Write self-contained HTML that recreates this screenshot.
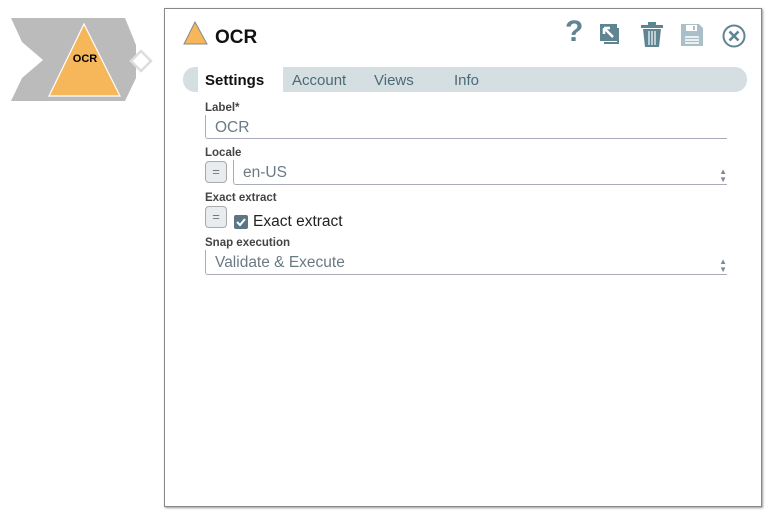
<!DOCTYPE html>
<html><head><style>
body{margin:0;width:773px;height:518px;background:#fff;font-family:"Liberation Sans",sans-serif;position:relative;overflow:hidden}
.panel{position:absolute;left:164px;top:8px;width:596px;height:497px;border:1px solid #888;box-shadow:1px 1px 2px #999;background:#fff}
.abs{position:absolute}
.lbl{position:absolute;left:40px;font-size:11.5px;font-weight:bold;color:#444}
.inp{position:absolute;border-left:1px solid #aab;border-bottom:1px solid #aab;border-radius:0 0 0 3px;font-size:15.5px;color:#6a7a85;padding-left:9px;padding-top:4px;box-sizing:border-box}
.eq{position:absolute;left:40px;width:22px;height:22px;border:1px solid #aaa;border-radius:4px;background:#e8ecee;box-sizing:border-box;color:#777;font-size:13px;text-align:center;line-height:19px}
.arr{position:absolute;right:0;font-size:8px;color:#7a8a95;line-height:8px}
</style></head><body>
<svg class="abs" style="left:0;top:0" width="160" height="110">
<polygon points="11,18 125,18 136,45 136,78 125,101 11,101 22,78 43,60 22,42" fill="#bbb"/>
<polygon points="84,24 120,96 49,96" fill="#f5b75a" stroke="#fff" stroke-width="1.2"/>
<text x="85" y="62" font-size="11" font-weight="bold" text-anchor="middle" font-family="Liberation Sans">OCR</text>
<polygon points="141,51 151,61 141,71 131,61" fill="#fff" stroke="#ddd" stroke-width="2.5"/>
</svg>
<div class="panel">
<svg class="abs" style="left:18px;top:12px" width="26" height="24"><polygon points="12,1 24,23 1,23" fill="#f5b75a" stroke="#888" stroke-width="1"/></svg>
<div class="abs" style="left:50px;top:18px;font-size:19px;font-weight:bold;color:#111">OCR</div>
<div class="abs" style="left:400px;top:6px;font-size:30px;font-weight:bold;color:#5f8593">?</div>
<svg class="abs" style="left:434px;top:14px" width="26" height="26"><rect x="1" y="1" width="17" height="17" fill="#5f8593"/><path d="M19 5v15H5" stroke="#5f8593" stroke-width="2" fill="none"/><path d="M14 14L5 5M5 5h6M5 5v6" stroke="#fff" stroke-width="2.5" fill="none"/></svg>
<svg class="abs" style="left:475px;top:13px" width="24" height="26"><rect x="1" y="3" width="22" height="3" fill="#5f8593"/><rect x="8" y="0" width="8" height="3" fill="#5f8593"/><path d="M3 7l2 18h14l2-18z" fill="#5f8593"/><path d="M9 9v14M12 9v14M15 9v14" stroke="#fff" stroke-width="1.2"/></svg>
<svg class="abs" style="left:515px;top:14px" width="24" height="24"><path d="M1 1h18l4 4v18H1z" fill="#a9c0c8"/><rect x="6" y="2" width="11" height="6" fill="#fff"/><rect x="13" y="3" width="2" height="4" fill="#a9c0c8"/><path d="M5 14h14M5 17h14M5 20h14" stroke="#fff" stroke-width="1.4"/></svg>
<svg class="abs" style="left:557px;top:15px" width="24" height="24"><circle cx="12" cy="12" r="10.5" fill="none" stroke="#5f8593" stroke-width="2"/><path d="M7.5 7.5l9 9M16.5 7.5l-9 9" stroke="#5f8593" stroke-width="2.6"/></svg>
<div class="abs" style="left:18px;top:58px;width:564px;height:25px;background:#d5dfe2;border-radius:12px"></div>
<div class="abs" style="left:33px;top:58px;width:85px;height:25px;background:#fff"></div>
<div class="abs" style="left:40px;top:63px;font-size:15px;font-weight:bold;color:#111">Settings</div>
<div class="abs" style="left:127px;top:63px;font-size:15px;color:#4a6a78">Account</div>
<div class="abs" style="left:209px;top:63px;font-size:15px;color:#4a6a78">Views</div>
<div class="abs" style="left:289px;top:63px;font-size:15px;color:#4a6a78">Info</div>
<div class="lbl" style="top:93px">Label*</div>
<div class="inp" style="left:40px;top:106px;width:522px;height:24px">OCR</div>
<div class="lbl" style="top:138px">Locale</div>
<div class="eq" style="top:152px">=</div>
<div class="inp" style="left:68px;top:151px;width:494px;height:25px">en-US<div class="arr" style="top:8px">▲<br>▼</div></div>
<div class="lbl" style="top:183px">Exact extract</div>
<div class="eq" style="top:197px">=</div>
<svg class="abs" style="left:69px;top:206px" width="14" height="14"><rect width="14" height="14" rx="2" fill="#5a7684"/><path d="M3 7l3 3 5-6" stroke="#fff" stroke-width="2" fill="none"/></svg>
<div class="abs" style="left:88px;top:204px;font-size:15.5px;color:#222">Exact extract</div>
<div class="lbl" style="top:228px">Snap execution</div>
<div class="inp" style="left:40px;top:241px;width:522px;height:25px">Validate &amp; Execute<div class="arr" style="top:8px">▲<br>▼</div></div>
</div>
</body></html>
